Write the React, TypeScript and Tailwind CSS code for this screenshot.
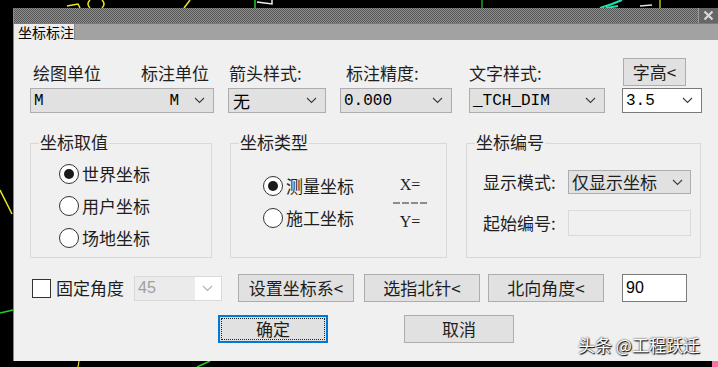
import React from 'react';

const cjk = "font-['Noto_Sans_CJK_SC','Noto_Sans_CJK_JP',sans-serif]";
const mono = "font-['Liberation_Mono',monospace]";

function Chevron() {
  return (
    <svg width="11" height="7" viewBox="0 0 11 7" className="shrink-0">
      <polyline points="1,1 5.5,5.5 10,1" fill="none" stroke="#3c3c3c" strokeWidth="1.1" />
    </svg>
  );
}

function Combo({ className = '', children }: { className?: string; children: React.ReactNode }) {
  return (
    <div className={`flex items-center border ${className}`}>
      {children}
    </div>
  );
}

function Radio({ checked, label }: { checked?: boolean; label: string }) {
  return (
    <div className="h-[32px] flex items-center gap-[3px]">
      <span className="w-[20px] h-[20px] rounded-full border border-[#333] bg-white flex items-center justify-center">
        {checked && <span className="w-[10px] h-[10px] rounded-full bg-[#1a1a1a]" />}
      </span>
      <span className={`${cjk} text-[17px] leading-[20px] text-[#1e1e1e]`}>{label}</span>
    </div>
  );
}

function Btn({ className = '', children }: { className?: string; children: React.ReactNode }) {
  return (
    <div className={`flex items-center justify-center border border-[#adadad] bg-[#e1e1e1] ${cjk} text-[17px] leading-[20px] text-[#1e1e1e] ${className}`}>
      {children}
    </div>
  );
}

function Group({ title, className = '', children }: { title: string; className?: string; children: React.ReactNode }) {
  return (
    <div className={`relative border border-[#d9d9d9] ${className}`}>
      <span className={`absolute -top-[12px] left-[8px] px-[1px] bg-[#f0f0f0] ${cjk} text-[17px] leading-[20px] text-[#1e1e1e]`}>{title}</span>
      {children}
    </div>
  );
}

export default function App() {
  return (
    <div className="relative w-[718px] h-[367px] bg-black overflow-hidden">
      {/* CAD drawing behind the dialog */}
      <svg className="absolute inset-0" width="718" height="367">
        <path d="M67 6 L78 4 L80 8" stroke="#e8e820" fill="none" strokeWidth="1.5" />
        <path d="M90 0 Q86 4 90 8 M102 0 Q106 4 102 8" stroke="#e8e820" fill="none" strokeWidth="1.5" />
        <path d="M184 8 L190 0" stroke="#e8e820" strokeWidth="1.5" />
        <path d="M255 0 L255 9" stroke="#20d020" strokeWidth="1.5" />
        <path d="M257 2 L272 4 L272 0" stroke="#f0f0f0" fill="none" strokeWidth="1.5" />
        <path d="M482 0 L482 9" stroke="#20d020" strokeWidth="1.2" />
        <path d="M600 8 L612 4 L622 0 M606 8 L618 6" stroke="#20e0b0" fill="none" strokeWidth="2" />
        <path d="M640 6 L652 5" stroke="#e0e0e0" strokeWidth="1.5" />
        <path d="M660 0 L660 9" stroke="#e8e820" strokeWidth="1.2" />
        <path d="M0 190 L12 214" stroke="#e8e820" strokeWidth="1.5" />
        <path d="M0 313 L13 310" stroke="#20d020" strokeWidth="1.5" />
        <path d="M78 367 L79 361" stroke="#e8e820" strokeWidth="1.2" />
        <path d="M197 367 L210 361" stroke="#20d020" strokeWidth="1.5" />
        <rect x="712" y="361" width="6" height="6" fill="#ff70a0" />
      </svg>

      <div className="relative ml-[13px] mt-[8px] w-[705px] h-[353px] flex flex-col border-l border-[#888]">
        {/* title bar */}
        <div className="h-[15px] flex justify-end bg-[#5a5a5a] bg-[repeating-conic-gradient(#909090_0_25%,#555_0_50%)] bg-[length:2px_2px]">
          <div className="w-[20px] h-full border-l border-[#9a9a9a] bg-[#666] flex items-center justify-center">
            <svg width="11" height="11" viewBox="0 0 11 11">
              <path d="M1.5 1.5 L9.5 9.5 M9.5 1.5 L1.5 9.5" stroke="#d8d8d8" strokeWidth="2.2" />
            </svg>
          </div>
        </div>
        {/* tab strip */}
        <div className="h-[17px] flex items-end bg-[#a2a2a2] border-t border-[#7a7a7a]">
          <div className={`h-[16px] w-[61px] bg-[#ececec] border-r border-[#888] flex items-center pl-[4px] ${cjk} text-[14px] leading-[16px] text-black`}>
            坐标标注
          </div>
        </div>

        {/* body */}
        <div className="flex-1 bg-[#f0f0f0] pl-[16px] pt-[18px]">
          {/* top rows */}
          <div className="flex items-start">
            <div className="w-[184px]">
              <div className={`h-[30px] flex items-center ${cjk} text-[17px] leading-[20px] text-[#1e1e1e]`}>
                <span className="ml-[3px] w-[108px]">绘图单位</span>
                <span>标注单位</span>
              </div>
              <Combo className="h-[25px] border-[#adadad] bg-[#e1e1e1] pl-[3px] pr-[8px]">
                <span className={`${mono} text-[16px] flex-1`}>M</span>
                <span className={`${mono} text-[16px] mr-[15px]`}>M</span>
                <Chevron />
              </Combo>
            </div>
            <div className="ml-[14px] w-[98px]">
              <div className={`h-[30px] flex items-center pl-[1px] ${cjk} text-[17px] leading-[20px] text-[#1e1e1e]`}>箭头样式:</div>
              <Combo className="h-[25px] border-[#adadad] bg-[#e1e1e1] pl-[4px] pr-[8px]">
                <span className={`${cjk} text-[17px] leading-[20px] flex-1`}>无</span>
                <Chevron />
              </Combo>
            </div>
            <div className="ml-[14px] w-[112px]">
              <div className={`h-[30px] flex items-center pl-[6px] ${cjk} text-[17px] leading-[20px] text-[#1e1e1e]`}>标注精度:</div>
              <Combo className="h-[25px] border-[#adadad] bg-[#e1e1e1] pl-[3px] pr-[8px]">
                <span className={`${mono} text-[16px] flex-1`}>0.000</span>
                <Chevron />
              </Combo>
            </div>
            <div className="ml-[17px] w-[136px]">
              <div className={`h-[30px] flex items-center ${cjk} text-[17px] leading-[20px] text-[#1e1e1e]`}>文字样式:</div>
              <Combo className="h-[25px] border-[#adadad] bg-[#e1e1e1] pl-[3px] pr-[8px]">
                <span className={`${mono} text-[16px] flex-1`}>_TCH_DIM</span>
                <Chevron />
              </Combo>
            </div>
            <div className="ml-[17px] w-[80px]">
              <Btn className="ml-[1px] w-[63px] h-[28px]">字高&lt;</Btn>
              <Combo className="mt-[2px] h-[25px] border-[#7a7a7a] bg-white pl-[3px] pr-[8px]">
                <span className={`${mono} text-[16px] flex-1`}>3.5</span>
                <Chevron />
              </Combo>
            </div>
          </div>

          {/* groups */}
          <div className="mt-[30px] flex items-start">
            <Group title="坐标取值" className="w-[182px] h-[115px] pl-[28px] pt-[14px]">
              <Radio checked label="世界坐标" />
              <Radio label="用户坐标" />
              <Radio label="场地坐标" />
            </Group>
            <Group title="坐标类型" className="ml-[18px] w-[217px] h-[115px] pl-[32px] pt-[26px]">
              <div className="flex">
                <div className="w-[130px]">
                  <Radio checked label="测量坐标" />
                  <Radio label="施工坐标" />
                </div>
                <div className="w-[34px] flex flex-col items-center font-['Liberation_Serif',serif] text-[16px] text-[#1e1e1e] leading-[16px]">
                  <span className="mt-[7px]">X=</span>
                  <svg width="34" height="2" viewBox="0 0 34 2" className="mt-[9px]">
                    <line x1="0" y1="1" x2="34" y2="1" stroke="#2a2a2a" strokeWidth="1.2" strokeDasharray="7 2" />
                  </svg>
                  <span className="mt-[10px]">Y=</span>
                </div>
              </div>
            </Group>
            <Group title="坐标编号" className="ml-[19px] w-[235px] h-[115px] pl-[16px] pt-[26px]">
              <div className="flex items-center">
                <span className={`w-[85px] ${cjk} text-[17px] leading-[20px] text-[#1e1e1e]`}>显示模式:</span>
                <Combo className="w-[123px] h-[24px] border-[#adadad] bg-[#e1e1e1] pl-[3px] pr-[7px]">
                  <span className={`${cjk} text-[17px] leading-[20px] flex-1 text-[#1e1e1e]`}>仅显示坐标</span>
                  <Chevron />
                </Combo>
              </div>
              <div className="mt-[16px] flex items-center">
                <span className={`w-[85px] ${cjk} text-[17px] leading-[20px] text-[#1e1e1e]`}>起始编号:</span>
                <div className="w-[123px] h-[26px] border border-[#dadada] bg-[#f0f0f0]" />
              </div>
            </Group>
          </div>

          {/* bottom controls */}
          <div className="mt-[15px] h-[30px] flex items-center">
            <span className="ml-[2px] w-[19px] h-[19px] border border-[#333] bg-white" />
            <span className={`ml-[5px] w-[70px] ${cjk} text-[17px] leading-[20px] text-[#1e1e1e]`}>固定角度</span>
            <div className="ml-[8px] w-[88px] h-[25px] border border-[#d9d9d9] bg-white flex items-center pr-[8px]">
              <div className="w-[60px] h-full bg-[#ebebeb] flex items-center pl-[3px] font-['Liberation_Sans',sans-serif] text-[16px] text-[#a0a0a0]">45</div>
              <div className="flex-1" />
              <svg width="11" height="7" viewBox="0 0 11 7">
                <polyline points="1,1 5.5,5.5 10,1" fill="none" stroke="#b0b0b0" strokeWidth="1.1" />
              </svg>
            </div>
            <Btn className="ml-[16px] w-[116px] h-[28px]">设置坐标系&lt;</Btn>
            <Btn className="ml-[10px] w-[116px] h-[28px]">选指北针&lt;</Btn>
            <Btn className="ml-[8px] w-[116px] h-[28px]">北向角度&lt;</Btn>
            <div className="ml-[18px] w-[65px] h-[28px] border border-[#7a7a7a] bg-white flex items-center pl-[3px] font-['Liberation_Sans',sans-serif] text-[16px] text-black">90</div>
          </div>

          {/* ok / cancel */}
          <div className="mt-[12px] flex">
            <div className="ml-[188px] w-[110px] h-[28px] border-2 border-[#0078d7] bg-[#e1e1e1] p-[1px]">
              <div className={`w-full h-full border border-dotted border-[#222] flex items-center justify-center ${cjk} text-[17px] leading-[20px] text-[#1e1e1e]`}>确定</div>
            </div>
            <Btn className="ml-[76px] w-[110px] h-[28px]">取消</Btn>
          </div>
        </div>

        {/* watermark */}
        <div className={`absolute left-[564px] top-[326px] ${cjk} text-[17px] leading-[22px] text-white [text-shadow:0_0_2px_#000,1px_1px_1px_#000]`}>
          头条 @工程跃迁
        </div>
      </div>
    </div>
  );
}
